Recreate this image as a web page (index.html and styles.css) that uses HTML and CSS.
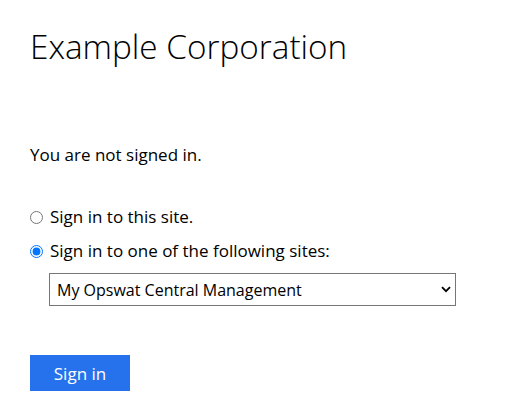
FILE: index.html
```html
<!DOCTYPE html>
<html lang="en">
<head>
<meta charset="utf-8">
<title>Sign In</title>
<link rel="stylesheet" href="styles.css">
</head>
<body>
<main class="page">
  <h1 class="title">Example Corporation</h1>
  <p class="status">You are not signed in.</p>
  <form class="form">
    <label class="option">
      <input type="radio" name="site" class="radio">
      <span>Sign in to this site.</span>
    </label>
    <label class="option">
      <input type="radio" name="site" class="radio" checked>
      <span>Sign in to one of the following sites:</span>
    </label>
    <div class="select-wrap">
      <select class="select">
        <option>My Opswat Central Management</option>
      </select>
      <svg class="chevron" width="10" height="7" viewBox="0 0 10 7" aria-hidden="true">
        <path d="M1 1.2 L5 5.2 L9 1.2" fill="none" stroke="#000" stroke-width="1.8"/>
      </svg>
    </div>
    <button type="button" class="btn">Sign in</button>
  </form>
</main>
</body>
</html>
```

FILE: styles.css
```css
html, body {
  margin: 0;
  padding: 0;
  background: #ffffff;
}
body {
  font-family: "Open Sans", "Noto Sans", sans-serif;
  color: #000000;
}
.page {
  padding: 22px 30px 0 30px;
}
.title {
  margin: 0;
  font-size: 33.3px;
  font-weight: 300;
  line-height: 48px;
  color: #000;
}
.status {
  margin: 74px 0 0 0;
  font-size: 17px;
  line-height: 22px;
}
.form {
  margin-top: 34px;
  display: flex;
  flex-direction: column;
  align-items: flex-start;
}
.option {
  display: flex;
  align-items: center;
  font-size: 17px;
  line-height: 22px;
  height: 34px;
}
.radio {
  width: 13px;
  height: 13px;
  margin: 0 7px 0 0;
}
.select-wrap {
  position: relative;
  margin-left: 19px;
  margin-top: 5px;
}
.select {
  display: block;
  -webkit-appearance: none;
  appearance: none;
  width: 407px;
  height: 33px;
  font-family: "Open Sans", "Noto Sans", sans-serif;
  font-size: 16px;
  padding: 0 26px 0 7px;
  border: 1px solid #767676;
  border-radius: 0;
  background: #fff;
  color: #000;
}
.chevron {
  position: absolute;
  right: 5px;
  top: 13px;
  pointer-events: none;
}
.btn {
  margin-top: 49px;
  width: 100px;
  height: 36px;
  border: none;
  background: #2672ec;
  color: #fff;
  font-family: "Open Sans", "Noto Sans", sans-serif;
  font-size: 17px;
  padding: 0;
}
```
